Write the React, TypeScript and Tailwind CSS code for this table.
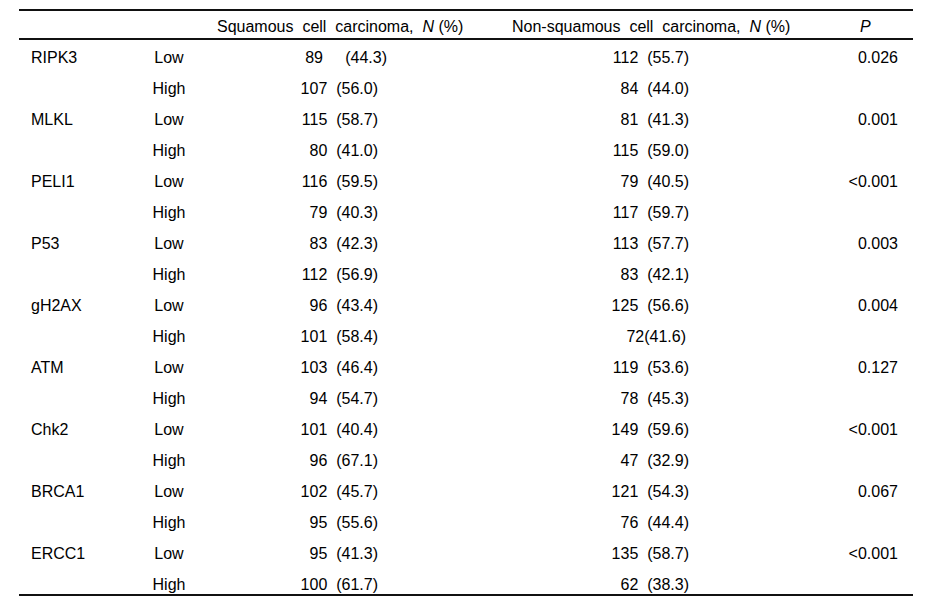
import React from "react";

type Row = {
  gene: string;
  low: [string, string];
  high: [string, string];
  p: string;
};

const rows: Row[] = [
  { gene: "RIPK3", low: ["89     (44.3)", "112  (55.7)"], high: ["107  (56.0)", "84  (44.0)"], p: "0.026" },
  { gene: "MLKL", low: ["115  (58.7)", "81  (41.3)"], high: ["80  (41.0)", "115  (59.0)"], p: "0.001" },
  { gene: "PELI1", low: ["116  (59.5)", "79  (40.5)"], high: ["79  (40.3)", "117  (59.7)"], p: "<0.001" },
  { gene: "P53", low: ["83  (42.3)", "113  (57.7)"], high: ["112  (56.9)", "83  (42.1)"], p: "0.003" },
  { gene: "gH2AX", low: ["96  (43.4)", "125  (56.6)"], high: ["101  (58.4)", "72(41.6)"], p: "0.004" },
  { gene: "ATM", low: ["103  (46.4)", "119  (53.6)"], high: ["94  (54.7)", "78  (45.3)"], p: "0.127" },
  { gene: "Chk2", low: ["101  (40.4)", "149  (59.6)"], high: ["96  (67.1)", "47  (32.9)"], p: "<0.001" },
  { gene: "BRCA1", low: ["102  (45.7)", "121  (54.3)"], high: ["95  (55.6)", "76  (44.4)"], p: "0.067" },
  { gene: "ERCC1", low: ["95  (41.3)", "135  (58.7)"], high: ["100  (61.7)", "62  (38.3)"], p: "<0.001" },
];

function DataRow({
  gene,
  level,
  sq,
  nsq,
  p,
  last,
}: {
  gene: string;
  level: string;
  sq: string;
  nsq: string;
  p: string;
  last?: boolean;
}) {
  const sqShift = sq.startsWith("89 ") ? "mr-[-9px]" : "";
  const nsqShift = nsq === "72(41.6)" ? "mr-[3px]" : "";
  return (
    <div className={`flex whitespace-pre leading-[35px] ${last ? "h-[27px]" : "h-[31px]"}`}>
      <div className="w-[111px] shrink-0 pl-[12px]">{gene}</div>
      <div className="w-[78px] shrink-0 text-center">{level}</div>
      <div className="w-[170px] shrink-0 flex justify-end">
        <span className={sqShift}>{sq}</span>
      </div>
      <div className="w-[311px] shrink-0 flex justify-end">
        <span className={nsqShift}>{nsq}</span>
      </div>
      <div className="w-[209px] shrink-0 text-right">{p}</div>
    </div>
  );
}

export default function App() {
  return (
    <div
      className="w-[935px] h-[615px] bg-white text-black text-[16px] pt-[9px] pl-[19px]"
      style={{ fontFamily: '"Liberation Sans", Arial, sans-serif' }}
    >
      <div className="w-[894px] border-t-2 border-b-2 border-[#111]">
        <div className="flex h-[29px] items-center pt-[5px] whitespace-pre border-b-2 border-[#111]">
          <div className="w-[198px] shrink-0" />
          <div className="w-[295px] shrink-0">
            {"Squamous  cell  carcinoma,  "}
            <i>N</i>
            {" (%)"}
          </div>
          <div className="w-[348px] shrink-0">
            {"Non-squamous  cell  carcinoma,  "}
            <i>N</i>
            {" (%)"}
          </div>
          <div>
            <i>P</i>
          </div>
        </div>
        {rows.map((r, i) => (
          <React.Fragment key={r.gene}>
            <DataRow gene={r.gene} level="Low" sq={r.low[0]} nsq={r.low[1]} p={r.p} />
            <DataRow
              gene=""
              level="High"
              sq={r.high[0]}
              nsq={r.high[1]}
              p=""
              last={i === rows.length - 1}
            />
          </React.Fragment>
        ))}
      </div>
    </div>
  );
}
